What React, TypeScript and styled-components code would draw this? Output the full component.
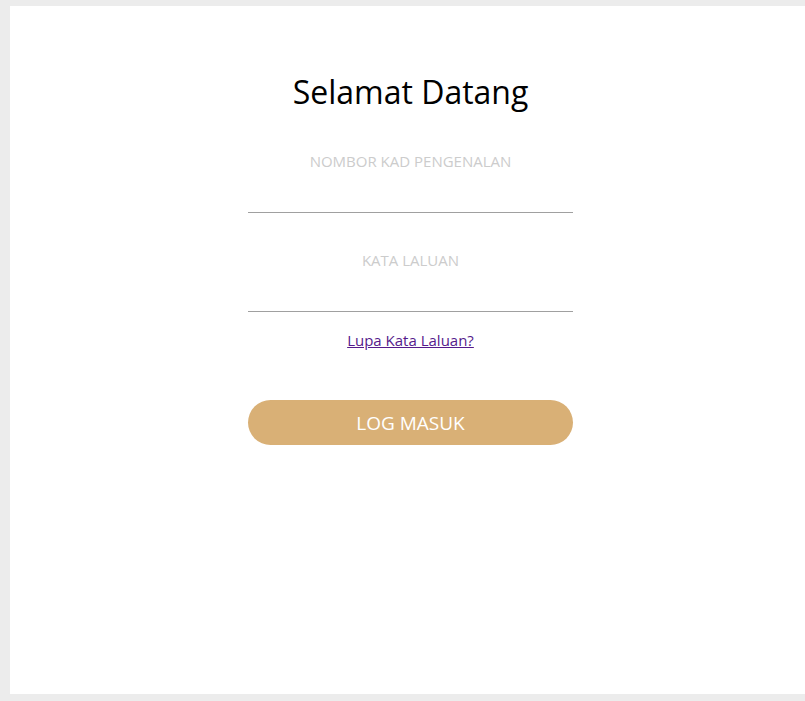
import React, { useState } from "react";
import styled, { createGlobalStyle } from "styled-components";

const GlobalStyle = createGlobalStyle`
  html, body {
    margin: 0;
    padding: 0;
    background: #ececec;
    overflow: hidden;
    font-family: "Open Sans", "Noto Sans", sans-serif;
  }
`;

const Page = styled.div`
  height: 701px;
  padding: 6px 0 0 10px;
  box-sizing: border-box;
`;

const Panel = styled.div`
  width: 801px;
  height: 688px;
  background: #ffffff;
  display: flex;
  justify-content: center;
  padding-top: 64px;
  box-sizing: border-box;
`;

const Form = styled.form`
  width: 325px;
  display: flex;
  flex-direction: column;
  align-items: stretch;
`;

const Title = styled.h1`
  margin: 0 0 37px;
  font-size: 32px;
  line-height: 44px;
  font-weight: 400;
  color: #000;
  text-align: center;
`;

const Field = styled.div`
  display: flex;
  flex-direction: column;
  margin-bottom: 37px;
`;

const Label = styled.label`
  font-size: 15px;
  line-height: 20px;
  color: #cccccc;
  text-align: center;
  text-transform: uppercase;
`;

const Input = styled.input`
  height: 42px;
  box-sizing: border-box;
  border: none;
  border-bottom: 1px solid #a0a0a0;
  outline: none;
  background: transparent;
  text-align: center;
  font-family: inherit;
  font-size: 16px;
  padding: 0;
`;

const Forgot = styled.a`
  align-self: center;
  margin-top: -19px;
  font-size: 15px;
  line-height: 20px;
  color: #551a8b;
  text-decoration: underline;
`;

const Submit = styled.button`
  margin-top: 50px;
  height: 45px;
  border: none;
  border-radius: 23px;
  background: #d9b076;
  color: #fff;
  font-family: inherit;
  font-size: 19px;
  cursor: pointer;
`;

function App() {
  const [ic, setIc] = useState("");
  const [pass, setPass] = useState("");
  return (
    <>
      <GlobalStyle />
      <Page>
        <Panel>
          <Form onSubmit={e => e.preventDefault()}>
            <Title>Selamat Datang</Title>
            <Field>
              <Label htmlFor="ic">Nombor Kad Pengenalan</Label>
              <Input id="ic" value={ic} onChange={e => setIc(e.target.value)} />
            </Field>
            <Field>
              <Label htmlFor="pass">Kata Laluan</Label>
              <Input
                id="pass"
                type="password"
                value={pass}
                onChange={e => setPass(e.target.value)}
              />
            </Field>
            <Forgot href="#">Lupa Kata Laluan?</Forgot>
            <Submit type="submit">LOG MASUK</Submit>
          </Form>
        </Panel>
      </Page>
    </>
  );
}

export default App;
